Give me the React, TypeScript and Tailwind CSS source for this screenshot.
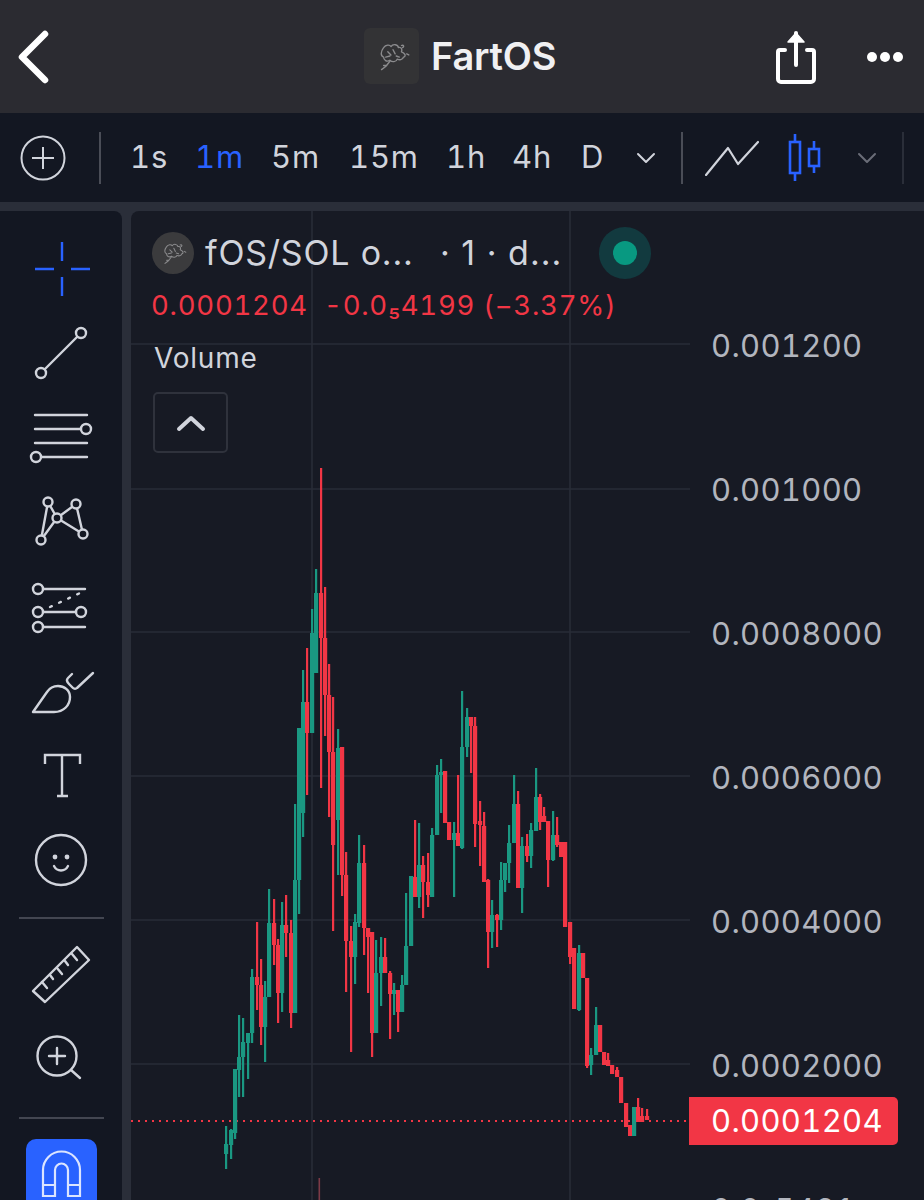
import React from "react";

// [x, wickTop, wickBottom, bodyTop, bodyBottom, up(1)/down(0)]
const candles: number[][] = [
  [226,1126,1169,1144,1154,1],[231,1129,1159,1130,1145,1],[235,1069,1139,1069,1133,1],[239,1015,1097,1057,1070,1],
  [243,1018,1097,1042,1057,1],[248,1033,1079,1033,1043,1],[252,969,1043,977,1033,1],[257,922,1010,977,985,0],
  [261,959,1045,985,1027,0],[265,981,1062,997,1027,1],[269,889,997,923,997,1],[274,899,965,923,945,0],
  [278,939,1023,945,993,0],[282,902,1012,925,993,1],[286,895,957,925,933,0],[291,920,1028,933,1013,0],
  [295,804,1013,880,1013,1],[299,728,914,728,880,1],[303,670,837,702,813,1],[307,648,795,702,733,0],
  [312,609,733,633,733,1],[316,569,673,593,673,1],[321,468,788,593,638,0],[325,587,736,638,695,0],
  [329,664,817,695,752,0],[333,697,931,752,845,0],[338,729,875,748,820,1],[342,747,896,747,875,0],
  [346,852,992,875,941,0],[351,926,1052,941,957,0],[355,914,984,922,957,1],[359,835,927,863,923,1],
  [364,845,955,863,928,0],[368,928,993,928,937,0],[372,932,1057,932,1033,0],[376,940,1033,973,1033,1],
  [381,937,1006,957,973,1],[385,938,973,957,973,0],[390,971,1039,973,994,0],[394,983,1015,990,994,1],
  [398,990,1032,990,1012,0],[402,975,1012,985,1012,1],[406,893,985,946,985,1],[411,876,946,876,946,1],
  [415,820,897,877,897,0],[419,823,908,865,897,1],[423,856,918,865,882,0],[428,853,907,882,895,0],
  [432,828,897,835,897,1],[437,765,835,775,835,1],[441,759,813,772,775,1],[445,771,823,771,823,0],
  [449,822,840,822,840,0],[454,822,897,833,840,1],[458,775,845,833,846,0],[462,691,849,747,848,1],
  [467,708,757,717,747,1],[471,717,773,717,726,0],[475,717,847,726,824,0],[480,801,866,821,825,0],
  [484,812,882,826,882,0],[488,879,968,880,932,0],[492,900,948,915,932,1],[497,914,947,915,920,0],
  [501,862,930,880,920,1],[505,863,892,863,880,1],[509,825,883,843,863,1],[514,775,843,804,843,1],
  [518,791,888,804,888,0],[522,837,913,846,888,1],[527,834,862,846,856,0],[531,823,868,830,856,1],
  [536,768,831,797,831,1],[540,794,830,797,822,0],[544,807,822,816,822,0],[548,821,887,821,860,0],
  [553,811,861,835,860,1],[557,817,847,835,845,0],[561,842,857,842,857,0],[565,842,927,842,927,0],
  [570,922,964,922,957,0],[574,948,1009,948,1009,0],[579,945,1011,953,1010,1],[583,953,978,953,978,0],
  [587,978,1068,978,1066,0],[591,1048,1075,1055,1065,1],[596,1007,1055,1025,1055,1],[600,1025,1052,1025,1052,0],
  [604,1052,1065,1052,1065,0],[608,1053,1066,1060,1066,0],[612,1065,1074,1065,1074,0],[617,1067,1077,1070,1077,0],
  [621,1077,1103,1077,1103,0],[626,1103,1127,1103,1127,0],[630,1125,1136,1125,1136,0],[634,1107,1136,1107,1136,1],
  [638,1098,1122,1107,1122,0],[642,1108,1122,1116,1122,0],[647,1109,1120,1116,1120,0],
];

const prices = ["0.001200", "0.001000", "0.0008000", "0.0006000", "0.0004000", "0.0002000", "0.0₅5421"];
const gridY = [344, 489, 632, 776, 920, 1064];

function CloudLogo({ size }: { size: number }) {
  return (
    <svg width={size} height={size} viewBox="0 0 40 40" fill="none" stroke="#8b8b8d" strokeWidth="1.3" strokeLinecap="round" strokeLinejoin="round">
      <path d="M12 12c2-3 6-3 7-1 2-3 7-2 7 1 3-1 4 2 3 4 3 1 5 4 2 5-1 3-4 3-6 2-1 3-5 3-7 1-3 2-6 0-6-3-3-1-3-5 0-9z" />
      <path d="M16 16l3 3M21 14l2 4M14 21l4-1M24 20l3 1" />
      <path d="M18 25l-4 5-4 3M15 29l-3 0" />
      <path d="M29 10c2-1 3 1 1 2M34 18l2 1" />
    </svg>
  );
}

function ToolIcon({ top, children }: { top: number; children: React.ReactNode }) {
  return (
    <svg width={70} height={60} viewBox={`26 ${top} 70 60`} fill="none" stroke="#d1d4dc" strokeWidth="2.4" strokeLinecap="round" strokeLinejoin="round" className="shrink-0 overflow-visible">
      {children}
    </svg>
  );
}

function Chevron({ muted }: { muted?: boolean }) {
  return (
    <svg width="20" height="12" viewBox="0 0 20 12" fill="none" stroke={muted ? "#6a6d78" : "#d1d4dc"} strokeWidth="2" strokeLinecap="round" strokeLinejoin="round">
      <path d="M2 2l8 8 8-8" />
    </svg>
  );
}

function Sidebar() {
  const dot = "#131722";
  return (
    <aside className="w-[122px] shrink-0 h-full bg-[#131722] rounded-tr-lg flex flex-col items-center overflow-hidden">
      <div className="mt-[28px]">
        <ToolIcon top={239}>
          <g stroke="#2962ff" strokeLinecap="butt">
            <path d="M62 242v19M62 277v19M35 269h19M71 269h19" />
          </g>
        </ToolIcon>
      </div>
      <div className="mt-[24px]">
        <ToolIcon top={323}>
          <path d="M45 369L77 337" />
          <circle cx="41" cy="373" r="5" />
          <circle cx="81" cy="333" r="5" />
        </ToolIcon>
      </div>
      <div className="mt-[23px]">
        <ToolIcon top={406}>
          <path d="M35 415h52M35 429h46M35 443h52M41 457h46" />
          <circle cx="86" cy="429" r="5" fill={dot} />
          <circle cx="36" cy="457" r="5" fill={dot} />
        </ToolIcon>
      </div>
      <div className="mt-[26px]">
        <ToolIcon top={492}>
          <path d="M41 540L48 502L57 518L41 540M57 518L76 504L83 534L57 518" />
          <circle cx="48" cy="502" r="4.5" fill={dot} />
          <circle cx="76" cy="504" r="4.5" fill={dot} />
          <circle cx="57" cy="518" r="4.5" fill={dot} />
          <circle cx="83" cy="534" r="4.5" fill={dot} />
          <circle cx="41" cy="540" r="4.5" fill={dot} />
        </ToolIcon>
      </div>
      <div className="mt-[26px]">
        <ToolIcon top={578}>
          <path d="M43 589h42M43 612h33M43 627h42" />
          <path d="M50 607l30-14" strokeDasharray="2 8" />
          <circle cx="38" cy="589" r="5" />
          <circle cx="38" cy="612" r="5" />
          <circle cx="81" cy="612" r="5" />
          <circle cx="38" cy="627" r="5" />
        </ToolIcon>
      </div>
      <div className="mt-[25px]">
        <ToolIcon top={663}>
          <path d="M33 712h21c10 0 16-7 16-15 0-7-6-11-12-11-6 0-9 3-11 6z" />
          <path d="M72 674l-4 4c-2 2-1 4 1 6l4 4c1 1 3 1 4 0l16-15" />
        </ToolIcon>
      </div>
      <div className="mt-[22px]">
        <ToolIcon top={745}>
          <path d="M45 764v-9h35v9M62 755v41M57 796h11" strokeLinecap="butt" strokeLinejoin="miter" />
        </ToolIcon>
      </div>
      <div className="mt-[25px]">
        <ToolIcon top={830}>
          <circle cx="61" cy="860" r="25" />
          <circle cx="55" cy="857" r="2.4" fill="#d1d4dc" stroke="none" />
          <circle cx="67" cy="857" r="2.4" fill="#d1d4dc" stroke="none" />
          <path d="M54 866c3 6 11 6 14 0" />
        </ToolIcon>
      </div>
      <div className="mt-[27px] w-[85px] h-[2px] bg-[#434651] shrink-0" />
      <div className="mt-[25px]">
        <ToolIcon top={945}>
          <path d="M77 948l12 13-44 42-12-11z" />
          <path d="M42 983l5 6M50 976l3 4M57 969l5 6M65 962l3 4M72 955l5 6" />
        </ToolIcon>
      </div>
      <div className="mt-[22px]">
        <ToolIcon top={1027}>
          <circle cx="57" cy="1057" r="19.5" />
          <path d="M49 1057h16M57 1049v16M71 1071l9 8" />
        </ToolIcon>
      </div>
      <div className="mt-[31px] w-[85px] h-[2px] bg-[#434651] shrink-0" />
      <div className="mt-[20px] w-[71px] h-[80px] rounded-[10px] bg-[#2962ff] shrink-0 flex justify-center">
        <svg width="71" height="60" viewBox="26 1140 71 60" fill="none" stroke="#dbe4ff" strokeWidth="2.2">
          <path d="M43 1197v-26a18.5 18.5 0 0 1 37 0v26H68v-26a6.5 6.5 0 0 0-13 0v26z" />
          <path d="M43 1186h12M68 1186h12" />
        </svg>
      </div>
    </aside>
  );
}

function Chart() {
  return (
    <svg width={559} height={989} viewBox="131 211 559 989" className="shrink-0">
      {gridY.map((y) => (
        <line key={y} x1="131" x2="690" y1={y} y2={y} stroke="#292c37" strokeWidth="1.6" />
      ))}
      <line x1="312" x2="312" y1="211" y2="1200" stroke="#292c37" strokeWidth="1.6" />
      <line x1="570" x2="570" y1="211" y2="1200" stroke="#292c37" strokeWidth="1.6" />
      <line x1="131" x2="688" y1="1121" y2="1121" stroke="#f23645" strokeWidth="2" strokeDasharray="2 5" />
      {candles.map(([x, wt, wb, bt, bb, up], i) => {
        const c = up ? "#1a9882" : "#f23645";
        return (
          <g key={i} fill={c}>
            <rect x={x - 1} y={wt} width={2.2} height={wb - wt} />
            <rect x={x - 2} y={bt} width={4.2} height={Math.max(bb - bt, 2)} />
          </g>
        );
      })}
      <rect x="318.5" y="1178" width="1.6" height="22" fill="#7d3a46" />
    </svg>
  );
}

export default function App() {
  return (
    <div className="w-[924px] h-[1200px] overflow-hidden bg-[#2a2e39] font-[Inter,sans-serif] flex flex-col">
      {/* Top bar */}
      <header className="h-[113px] shrink-0 bg-[#2b2b31] flex items-center justify-between relative">
        <svg width="60" height="60" viewBox="0 0 60 60" fill="none" stroke="#ffffff" strokeWidth="6.5" strokeLinecap="round" strokeLinejoin="round" className="ml-[4px]">
          <path d="M41 7L18 30l23 23" />
        </svg>
        <div className="absolute left-[364px] top-[28px] flex items-center">
          <div className="w-[55px] h-[56px] rounded-md bg-[#333335] flex items-center justify-center">
            <CloudLogo size={42} />
          </div>
          <span className="ml-[12px] text-[38px] leading-none font-semibold tracking-[-0.2px] text-[#f0f0f2]">FartOS</span>
        </div>
        <div className="flex items-center">
          <svg width="44" height="60" viewBox="0 0 44 60" fill="none" stroke="#ffffff" strokeWidth="4" strokeLinecap="round" strokeLinejoin="round">
            <path d="M11 23H6a2 2 0 0 0-2 2v27a3 3 0 0 0 3 3h30a3 3 0 0 0 3-3V25a2 2 0 0 0-2-2h-5" />
            <path d="M22 38V6" />
            <path d="M14 15l8-9 8 9z" fill="#ffffff" strokeWidth="1.5" />
          </svg>
          <div className="ml-[49px] mr-[21px] flex gap-[3px]">
            <span className="w-[10px] h-[10px] rounded-full bg-white" />
            <span className="w-[10px] h-[10px] rounded-full bg-white" />
            <span className="w-[10px] h-[10px] rounded-full bg-white" />
          </div>
        </div>
      </header>

      {/* Interval toolbar */}
      <div className="h-[89px] shrink-0 bg-[#131722] flex items-center text-[31px] tracking-[0.8px] tabular-nums text-[#d1d4dc]">
        <svg width="46" height="46" viewBox="0 0 46 46" fill="none" stroke="#d1d4dc" strokeWidth="2" className="ml-[20px]">
          <circle cx="23" cy="23" r="21.5" />
          <path d="M23 12v22M12 23h22" />
        </svg>
        <div className="ml-[33px] w-[2px] h-[52px] bg-[#4a4d57]" />
        <span className="ml-[29px] w-[36px]">1s</span>
        <span className="ml-[29px] w-[50px] text-[#2962ff]">1m</span>
        <span className="ml-[26px] w-[50px]">5m</span>
        <span className="ml-[28px] w-[70px]">15m</span>
        <span className="ml-[27px] w-[38px]">1h</span>
        <span className="ml-[28px] w-[40px]">4h</span>
        <span className="ml-[29px] w-[24px]">D</span>
        <div className="ml-[31px] flex"><Chevron /></div>
        <div className="ml-[25px] w-[2px] h-[52px] bg-[#4a4d57]" />
        <svg width="54" height="36" viewBox="0 0 54 36" fill="none" stroke="#d1d4dc" strokeWidth="2.2" strokeLinecap="round" strokeLinejoin="round" className="ml-[22px]">
          <path d="M1 35L23 8l10 16L53 2" />
        </svg>
        <svg width="34" height="50" viewBox="0 0 34 50" fill="none" stroke="#2962ff" strokeWidth="2.6" className="ml-[28px]">
          <path d="M8 1v47M27 8v32" />
          <rect x="3" y="9" width="10" height="31" fill="#131722" />
          <rect x="22" y="16" width="10" height="17" fill="#131722" />
        </svg>
        <div className="ml-[36px] flex"><Chevron muted /></div>
        <div className="ml-[25px] w-[2px] h-[52px] bg-[#2a2e39]" />
      </div>

      <div className="h-[9px] shrink-0" />

      {/* Workspace */}
      <div className="flex-1 min-h-0 flex gap-[9px]">
        <Sidebar />
        <main className="flex-1 min-w-0 h-full relative bg-[#171a24] rounded-tl-lg flex overflow-hidden">
          <Chart />
          <div className="flex-1 pt-[63px] pl-[21px] flex flex-col text-[#b2b5be] text-[31px] tabular-nums tracking-[0.3px]">
            {prices.map((p) => (
              <div key={p} className="h-[144px] shrink-0 flex items-center whitespace-nowrap">{p}</div>
            ))}
          </div>

          {/* Legend */}
          <div className="absolute left-[21px] top-[20px] flex flex-col items-start">
            <div className="flex items-center h-[44px]">
              <div className="w-[42px] h-[42px] rounded-full bg-[#3b3b3d] flex items-center justify-center">
                <CloudLogo size={32} />
              </div>
              <span className="ml-[11px] w-[235px] text-[34px] tracking-[0.8px] leading-none text-[#d1d4dc] whitespace-nowrap">fOS/SOL o...</span>
              <span className="w-[120px] text-[34px] tracking-[1px] leading-none text-[#d1d4dc] whitespace-nowrap">· 1 · d...</span>
              <span className="ml-[39px] w-[52px] h-[52px] rounded-full bg-[#123a3f] flex items-center justify-center">
                <span className="w-[24px] h-[24px] rounded-full bg-[#089981]" />
              </span>
            </div>
            <div className="mt-[14px] -ml-[1px] text-[27.5px] tabular-nums tracking-[0.75px] leading-[32px] text-[#f23645] whitespace-pre">0.0001204  -0.0₅4199 (−3.37%)</div>
            <div className="mt-[21px] ml-[2px] text-[28px] tracking-[0.8px] leading-[32px] text-[#d1d4dc]">Volume</div>
            <button className="mt-[18px] ml-[1px] w-[75px] h-[61px] rounded-[5px] border-2 border-[#2f323c] flex items-center justify-center">
              <svg width="30" height="18" viewBox="0 0 30 18" fill="none" stroke="#d1d4dc" strokeWidth="4" strokeLinecap="round" strokeLinejoin="round">
                <path d="M3 15L15 4l12 11" />
              </svg>
            </button>
          </div>

          {/* Last price tag */}
          <div className="absolute left-[558px] top-[886px] w-[209px] h-[48px] bg-[#f23645] rounded-r-[5px] flex items-center pl-[22px] text-[31px] tabular-nums tracking-[0.3px] text-white">
            0.0001204
          </div>
        </main>
      </div>
    </div>
  );
}
